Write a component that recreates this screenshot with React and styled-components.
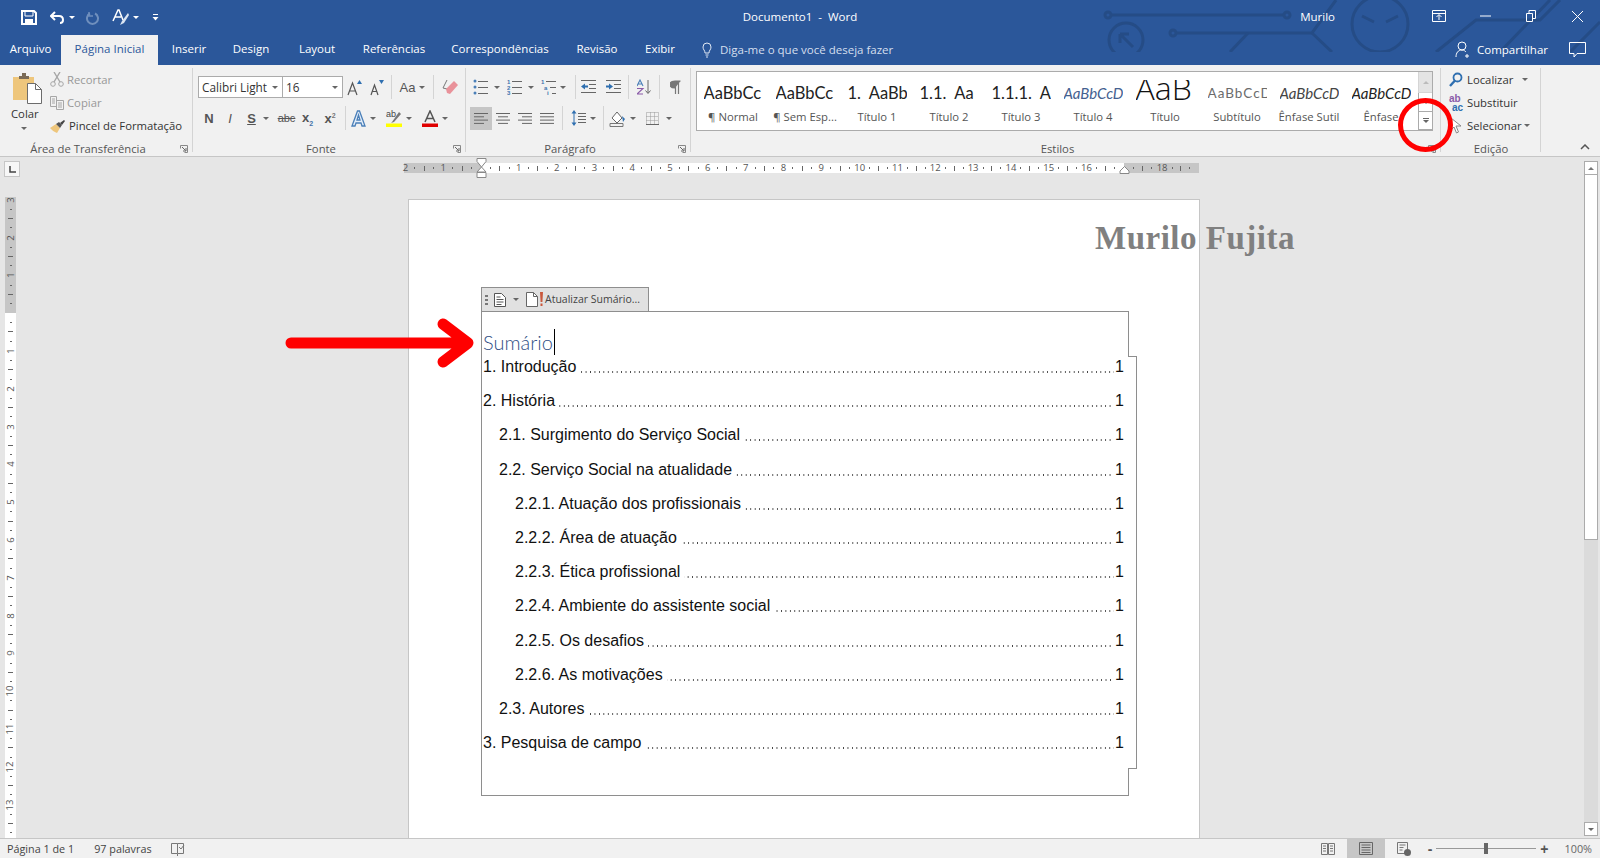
import styled, { createGlobalStyle } from 'styled-components';

const UI = "'Open Sans', 'Noto Sans', sans-serif";
const CM = 37.8;

const Global = createGlobalStyle`
html, body { margin: 0; padding: 0; background: #e6e6e6; }
* { box-sizing: border-box; }
svg { display: block; flex: none; }
`;

const Word = styled.div`
position: relative;
width: 1600px;
height: 858px;
overflow: hidden;
display: flex;
flex-direction: column;
font-family: ${UI};
font-size: 11.3px;
color: #444;
`;

/* ---------- title bar ---------- */
const Header = styled.header`
position: relative;
height: 65px;
flex: none;
background: #2b579a;
color: #fff;
`;
const Circuit = styled.svg`
position: absolute;
left: 1090px;
top: 0;
`;
const TitleRow = styled.div`
position: relative;
height: 35px;
display: grid;
grid-template-columns: 1fr auto 1fr;
align-items: center;
`;
const Qat = styled.div`
display: flex;
align-items: center;
padding-left: 21px;
`;
const QatBtn = styled.div`
width: ${p => p.$w}px;
display: flex;
align-items: center;
gap: 4px;
`;
const DocTitle = styled.div`
font-size: 11.5px;
margin-top: -3px;
`;
const TitleRight = styled.div`
display: flex;
align-items: center;
justify-content: flex-end;
`;
const UserName = styled.div`
font-size: 11.5px;
margin-right: 81px;
margin-top: -3px;
`;
const WinBtn = styled.div`
width: 46px;
height: 32px;
display: flex;
align-items: center;
justify-content: center;
margin-top: -3px;
`;
const TabRow = styled.nav`
position: relative;
height: 30px;
display: flex;
`;
const Tab = styled.div`
width: ${p => p.$w}px;
text-align: center;
line-height: 28px;
font-size: 11.5px;
color: ${p => (p.$active ? '#2b579a' : '#fff')};
background: ${p => (p.$active ? '#f1f1f1' : 'transparent')};
`;
const TellMe = styled.div`
display: flex;
align-items: center;
gap: 8px;
margin-left: 12px;
margin-top: -1px;
color: #d5dfee;
font-size: 11.5px;
`;
const Share = styled.div`
margin-left: auto;
margin-top: -1px;
display: flex;
align-items: center;
gap: 6px;
padding-right: 14px;
font-size: 11.5px;
`;
const ShareLabel = styled.span`
margin-right: 15px;
`;

/* ---------- ribbon ---------- */
const Ribbon = styled.section`
height: 92px;
flex: none;
display: flex;
background: #f1f1f1;
border-bottom: 1px solid #c6c6c6;
`;
const Group = styled.div`
position: relative;
width: ${p => p.$w}px;
padding-left: ${p => p.$pad || 0}px;
flex: none;
&::after {
  content: '';
  position: absolute;
  right: 0;
  top: 3px;
  bottom: 4px;
  width: 1px;
  background: #d4d4d4;
}
`;
const GroupLabel = styled.div`
position: absolute;
left: 0;
right: ${p => (p.$plain ? 0 : 17)}px;
bottom: -1px;
text-align: center;
font-size: 11.3px;
line-height: 16px;
color: #555;
`;
const Launcher = styled.svg`
position: absolute;
right: 5px;
bottom: 3px;
`;
const ClipBody = styled.div`
display: flex;
`;
const PasteCol = styled.div`
width: 50px;
padding-left: 13px;
padding-top: 8px;
display: flex;
flex-direction: column;
`;
const PasteLabel = styled.div`
color: #333;
margin: 2px 0 0 -2px;
line-height: 16px;
`;
const PasteCaret = styled.div`
display: flex;
margin: 5px 0 0 8px;
`;
const ClipList = styled.div`
padding-top: 3px;
`;
const ClipItem = styled.div`
height: 23px;
display: flex;
align-items: center;
gap: 3px;
color: ${p => (p.$off ? '#989898' : '#333')};
`;
const ToolRows = styled.div`
padding-top: 11px;
display: flex;
flex-direction: column;
gap: 9px;
`;
const ToolRow = styled.div`
height: 22px;
display: flex;
align-items: center;
`;
const Tool = styled.div`
width: ${p => p.$w}px;
height: ${p => (p.$active ? 23 : 22)}px;
flex: none;
display: flex;
align-items: center;
justify-content: center;
gap: ${p => p.$gap || 4}px;
background: ${p => (p.$active ? '#c6c6c6' : 'transparent')};
`;
const Sep = styled.div`
width: 1px;
height: 24px;
flex: none;
margin-left: ${p => p.$ml || 0}px;
background: #d4d4d4;
`;
const Caret = styled.span`
display: inline-block;
flex: none;
width: 0;
height: 0;
margin-left: ${p => p.$ml || 0}px;
border-left: 3px solid transparent;
border-right: 3px solid transparent;
border-top: 3px solid ${p => p.$color || '#666'};
`;
const Field = styled.div`
width: ${p => p.$w}px;
height: 22px;
flex: none;
display: flex;
align-items: center;
justify-content: space-between;
padding: 0 4px 0 3px;
background: #fff;
border: 1px solid #ababab;
margin-left: ${p => p.$ml || 0}px;
font-size: 11.8px;
color: #333;
`;
const LetterBtn = styled.span`
font-family: 'Liberation Sans', sans-serif;
font-size: ${p => p.$size || 13}px;
font-weight: ${p => (p.$bold ? 700 : 400)};
font-style: ${p => (p.$italic ? 'italic' : 'normal')};
text-decoration: ${p => p.$deco || 'none'};
color: #555;
`;
const Sub = styled.sub`
font-size: 7px;
color: #4472a8;
`;
const Sup = styled.sup`
font-size: 7px;
color: #777;
`;

/* styles gallery */
const Gallery = styled.div`
margin-top: 6px;
width: 737px;
height: 60px;
display: flex;
background: #fff;
border: 1px solid #ababab;
`;
const StyleItem = styled.div`
width: 72px;
flex: none;
display: flex;
flex-direction: column;
align-items: center;
`;
const Preview = styled.div`
width: 59px;
height: 30px;
margin-top: 8px;
flex: none;
overflow: hidden;
white-space: pre;
font-family: ${p => (p.$thin ? "'Open Sans'" : 'Lato')}, sans-serif;
font-weight: ${p => (p.$thin ? 300 : 400)};
font-size: ${p => p.$size || 16.5}px;
line-height: ${p => p.$lh || 26}px;
font-style: ${p => (p.$italic ? 'italic' : 'normal')};
letter-spacing: ${p => p.$ls || 0}px;
color: ${p => p.$color || '#222'};
`;
const StyleName = styled.div`
font-size: 11.3px;
line-height: 14px;
color: #555;
white-space: nowrap;
`;
const GalleryItems = styled.div`
width: 721px;
display: flex;
overflow: hidden;
`;
const GalleryScroll = styled.div`
width: 14px;
display: flex;
flex-direction: column;
`;
const GalleryBtn = styled.div`
height: ${p => p.$h}px;
display: flex;
flex-direction: column;
gap: 1px;
align-items: center;
justify-content: center;
background: ${p => (p.$off ? '#e4e4e4' : '#fff')};
border: 1px solid ${p => (p.$off ? '#d5d5d5' : '#ababab')};
border-width: 0 0 1px 1px;
`;
const MoreBar = styled.i`
display: block;
width: 6px;
height: 1px;
background: #666;
`;
const UpCaret = styled(Caret)`
border-top: 0;
border-bottom: 3px solid ${p => p.$color || '#777'};
`;
const EditList = styled.div`
padding-top: 3px;
`;
const EditItem = styled.div`
height: 23px;
display: flex;
align-items: center;
gap: 2px;
color: #333;
`;
const EditIcon = styled.span`
width: 18px;
flex: none;
display: flex;
justify-content: center;
margin-right: 0;
`;
const Collapse = styled.div`
flex: 1;
display: flex;
align-items: flex-end;
justify-content: flex-end;
padding: 0 10px 6px 0;
`;

/* ---------- document area ---------- */
const Workspace = styled.main`
flex: 1;
min-height: 0;
display: flex;
background: #e6e6e6;
`;
const DocColumn = styled.div`
flex: 1;
min-width: 0;
display: flex;
flex-direction: column;
`;
const RulerBar = styled.div`
height: 40px;
flex: none;
display: flex;
align-items: flex-start;
`;
const TabStop = styled.div`
width: 16px;
height: 16px;
margin: 4px 0 0 4px;
background: #f7f7f7;
border: 1px solid #c6c6c6;
display: flex;
align-items: center;
justify-content: center;
`;
const HRuler = styled.div`
position: relative;
width: 795px;
height: 10px;
margin: 6px 0 0 384px;
background: linear-gradient(to right, #c6c6c6 77px, #fff 77px, #fff 720px, #c6c6c6 720px);
`;
const HCells = styled.div`
display: flex;
height: 100%;
margin-left: -3.3px;
`;
const HCell = styled.div`
width: ${CM}px;
flex: none;
display: grid;
grid-template-columns: repeat(4, 1fr);
align-items: center;
justify-items: center;
`;
const RulerNum = styled.span`
font-size: 9.5px;
line-height: 10px;
color: #555;
white-space: nowrap;
`;
const HDot = styled.i`
display: block;
width: 1px;
height: 2px;
background: #666;
`;
const VDot = styled.i`
display: block;
width: 2px;
height: 1px;
background: #666;
`;
const HTick = styled.i`
display: block;
width: 1px;
height: 5px;
background: #666;
`;
const VTick = styled.i`
display: block;
width: 5px;
height: 1px;
background: #666;
`;
const HMarker = styled.svg`
position: absolute;
left: ${p => p.$x}px;
top: ${p => p.$y}px;
`;
const DocRow = styled.div`
flex: 1;
min-height: 0;
display: flex;
`;
const VRulerWrap = styled.div`
width: 16px;
flex: none;
padding-left: 5px;
`;
const VRuler = styled.div`
width: 11px;
height: 100%;
overflow: hidden;
background: linear-gradient(to bottom, #c6c6c6 116px, #fff 116px);
`;
const VCells = styled.div`
margin-top: -2.2px;
`;
const VCell = styled.div`
height: ${CM}px;
display: grid;
grid-template-rows: repeat(4, 1fr);
align-items: center;
justify-items: center;
`;
const VNum = styled(RulerNum)`
transform: rotate(-90deg);
`;
const Canvas = styled.div`
flex: 1;
min-width: 0;
overflow: hidden;
padding: 2px 0 0 392px;
`;
const Page = styled.article`
position: relative;
width: 792px;
height: 1100px;
background: #fff;
border: 1px solid #c6c6c6;
padding: 87px 0 0 72px;
font-family: 'Liberation Sans', Arial, sans-serif;
`;
const Watermark = styled.div`
position: absolute;
left: 686px;
top: 16px;
font-family: 'Liberation Serif', serif;
font-weight: 700;
font-size: 33px;
line-height: 44px;
letter-spacing: 0.5px;
color: #808080;
white-space: nowrap;
`;
const CcTab = styled.div`
width: 168px;
height: 24px;
display: flex;
align-items: center;
padding-left: 3px;
background: #e1e1e1;
border: 1px solid #8e8e8e;
border-bottom: 0;
font-family: ${UI};
font-size: 10.5px;
color: #444;
white-space: nowrap;
`;
const Grip = styled.div`
display: flex;
flex-direction: column;
gap: 2px;
margin-right: 6px;
& i { display: block; width: 3px; height: 2px; background: #777; }
`;
const CcCaret = styled.span`
width: 20px;
display: flex;
justify-content: center;
`;
const CcLabel = styled.span`
margin-left: 0;
margin-top: -2px;
`;
const CcHead = styled.div`
width: 648px;
height: 45px;
padding: 17px 0 0 1px;
background: #fff;
border: 1px solid #8e8e8e;
border-bottom: 0;
display: flex;
`;
const TocTitle = styled.h1`
margin: 0;
font-family: Lato, sans-serif;
font-weight: 300;
font-size: 20px;
line-height: 26px;
color: #2f4f85;
`;
const TextCursor = styled.span`
display: block;
width: 1px;
height: 26px;
margin-left: 1px;
background: #000;
`;
const CcBody = styled.div`
position: relative;
width: 656px;
border: 1px solid #8e8e8e;
border-width: 0 1px;
padding: 1px 12px 2px 1px;
&::before, &::after {
  content: '';
  position: absolute;
  right: -1px;
  width: 9px;
  height: 1px;
  background: #8e8e8e;
}
&::before { top: 0; }
&::after { bottom: 0; }
`;
const TocRow = styled.div`
height: 34.2px;
display: flex;
padding-left: ${p => p.$level * 16}px;
font-size: 16px;
line-height: 20px;
color: #111;
`;
const Leader = styled.span`
flex: 1;
min-width: 0;
height: 20px;
margin: 0 1px 0 4px;
background-image: linear-gradient(to right, #444 1.2px, transparent 1.2px);
background-size: 4.45px 1.5px;
background-repeat: repeat-x;
background-position: right 0 bottom 4.5px;
`;
const CcFoot = styled.div`
width: 648px;
height: 27px;
border: 1px solid #8e8e8e;
border-top: 0;
`;

/* scrollbar */
const ScrollBar = styled.div`
width: 14px;
flex: none;
margin: 4px 2px 2px 0;
display: flex;
flex-direction: column;
background: #dbdbdb;
`;
const ScrollBtn = styled.div`
height: 14px;
flex: none;
display: flex;
align-items: center;
justify-content: center;
background: #fff;
border: 1px solid #ababab;
`;
const Thumb = styled.div`
height: 365px;
flex: none;
background: #fff;
border: 1px solid #ababab;
border-top: 0;
`;
const ScrollRest = styled.div`
flex: 1;
`;

/* status bar */
const Status = styled.footer`
height: 20px;
flex: none;
display: flex;
align-items: center;
background: #f1f1f1;
border-top: 1px solid #c6c6c6;
font-size: 10.8px;
color: #444;
padding-left: 7px;
`;
const StatusText = styled.span`
margin-right: ${p => p.$mr}px;
`;
const StatusRight = styled.div`
margin-left: auto;
height: 100%;
display: flex;
align-items: center;
`;
const ViewBtn = styled.div`
width: 38px;
height: 100%;
display: flex;
align-items: center;
justify-content: center;
background: ${p => (p.$active ? '#c6c6c6' : 'transparent')};
`;
const ZoomTrack = styled.div`
position: relative;
width: 100px;
height: 1px;
margin: 0 4px;
background: #999;
`;
const ZoomThumb = styled.div`
position: absolute;
left: 48px;
top: -5px;
width: 4px;
height: 11px;
background: #666;
`;
const ZoomSign = styled.span`
margin-left: ${p => p.$ml || 0}px;
font-family: 'Liberation Sans', sans-serif;
font-weight: 700;
font-size: 14px;
line-height: 14px;
color: #555;
`;
const ZoomValue = styled.span`
margin: 0 8px 0 16px;
color: #666;
`;

/* annotations drawn on top of the screenshot */
const Arrow = styled.svg`
position: absolute;
left: 280px;
top: 312px;
`;
const Circle = styled.div`
position: absolute;
left: 1398px;
top: 98px;
width: 55px;
height: 54px;
border: 5px solid #f00;
border-radius: 50%;
`;

/* ---------- icons ---------- */
const Line = ({ d, c = '#666', w = 1 }) => <path d={d} fill="none" stroke={c} strokeWidth={w} />;

const SaveIcon = () => <svg width="16" height="15" viewBox="0 0 16 15"><path d="M1 1h12l2 2v11H1z" fill="none" stroke="#fff" strokeWidth="2" /><path d="M4 1h8v5H4z" fill="none" stroke="#fff" /><path d="M4 9h8v5H4z" fill="#fff" /></svg>;
const UndoIcon = () => <svg width="15" height="13" viewBox="0 0 15 13"><path d="M5 1L1 5l4 4" fill="none" stroke="#fff" strokeWidth="2" /><path d="M1 5h8c3 0 4 2 4 4s-1 3-3 3" fill="none" stroke="#fff" strokeWidth="2" /></svg>;
const RedoIcon = () => <svg width="14" height="14" viewBox="0 0 14 14"><path d="M9 2.500a5.500 5.500 0 1 1-5 0" fill="none" stroke="#6f8fbd" strokeWidth="2" /><path d="M3 1v4h4" fill="none" stroke="#6f8fbd" strokeWidth="1.500" /></svg>;
const FormatIcon = () => <svg width="17" height="17" viewBox="0 0 17 17"><path d="M1 12L6 1h1l4 10M3 8h6" fill="none" stroke="#fff" strokeWidth="1.500" /><path d="M16 4l-6 8-2 4 4-2 5-8z" fill="#dbe5f2" /></svg>;
const CustomizeIcon = () => <svg width="7" height="7" viewBox="0 0 7 7"><path d="M1 .5h5" stroke="#fff" /><path d="M.5 3h6L3.500 6.500z" fill="#fff" /></svg>;
const RestoreRibbon = () => <svg width="14" height="12" viewBox="0 0 14 12"><path d="M.5.5h13v11H.5zM.5 3.500h13" fill="none" stroke="#fff" /><path d="M7 10V5M4.500 7L7 4.500 9.500 7" fill="none" stroke="#fff" /></svg>;
const MinIcon = () => <svg width="11" height="2" viewBox="0 0 11 2"><path d="M0 1h11" stroke="#fff" /></svg>;
const MaxIcon = () => <svg width="10" height="12" viewBox="0 0 10 12"><path d="M.5 3.500h6v8h-6zM3 3V.5h6.500v8H7" fill="none" stroke="#fff" /></svg>;
const CloseIcon = () => <svg width="11" height="11" viewBox="0 0 11 11"><path d="M0 0l11 11M11 0L0 11" stroke="#fff" /></svg>;
const BulbIcon = () => <svg width="10" height="16" viewBox="0 0 10 16"><path d="M3 11C3 8 1 8 1 5a4 4 0 0 1 8 0c0 3-2 3-2 6zM3.500 13h3M4 15h2" fill="none" stroke="#dfe7f3" /></svg>;
const PersonIcon = () => <svg width="16" height="17" viewBox="0 0 16 17"><circle cx="7" cy="5" r="4" fill="none" stroke="#fff" /><path d="M1 16c0-4 2-7 6-7 2 0 3 1 4 2M12 13v4M10 15h4" fill="none" stroke="#fff" /></svg>;
const CommentIcon = () => <svg width="17" height="16" viewBox="0 0 17 16"><path d="M.5.5h16v11H8l-3 3.500v-3.500H.5z" fill="none" stroke="#fff" /></svg>;

const PasteIcon = () => <svg width="29" height="31" viewBox="0 0 29 31"><path d="M0 4h21v23H0z" fill="#eec67c" /><path d="M6 3h3V0h4v3h3v3H6z" fill="#7a6a55" /><path d="M14.500 10.500h8l6 6v14h-14z" fill="#fff" stroke="#6c6c6c" /><path d="M22.500 10.500v6h6" fill="none" stroke="#6c6c6c" /></svg>;
const CutIcon = () => <svg width="14" height="15" viewBox="0 0 14 15"><circle cx="3" cy="12" r="2.300" fill="none" stroke="#a6a6a6" /><circle cx="11" cy="12" r="2.300" fill="none" stroke="#a6a6a6" /><path d="M4 10L10 0M10 10L4 0" stroke="#a6a6a6" strokeWidth="1.400" /></svg>;
const CopyIcon = () => <svg width="14" height="14" viewBox="0 0 14 14"><path d="M.5.5h6v10h-6zM6.500 4.500h7v9h-7zM2 3h3M2 5h3M2 7h3M8 7h4M8 9h4M8 11h4" fill="#f1f1f1" stroke="#a6a6a6" /></svg>;
const BrushIcon = () => <svg width="16" height="14" viewBox="0 0 16 14"><path d="M0 9l6-4 4 4-3 5C4 13 2 11 0 9z" fill="#eec67c" /><path d="M6 5l4 4 2-3-3-3z" fill="#555" /><path d="M10 4l4-3 1 1-3 4z" fill="#444" /></svg>;

const GrowIcon = ({ big, c }) => (
  <svg width="16" height="17" viewBox="0 0 16 17">
    <path d={big ? 'M1 16L5.500 4 10 16M2.500 12h6' : 'M2 16l3.500-10L9 16M3.300 12.500h4.500'} fill="none" stroke="#555" strokeWidth="1.200" />
    <path d={big ? 'M10 5l2.500-4L15 5z' : 'M10 1h5l-2.500 4z'} fill={c} />
  </svg>
);
const EraserIcon = () => <svg width="17" height="17" viewBox="0 0 17 17"><path d="M5 1L1 9l4 1" fill="none" stroke="#777" /><path d="M4 10l8-8 4 4-8 9-3-1z" fill="#e9929a" /></svg>;
const TextFx = () => <svg width="15" height="17" viewBox="0 0 15 17"><path d="M1 16L6.500 1h2L14 16h-3l-1-3H5l-1 3zM6 10h3L7.500 5z" fill="#e3edf8" stroke="#4a7fb8" strokeWidth="1.300" /></svg>;
const Highlight = () => <svg width="16" height="18" viewBox="0 0 16 18"><path d="M0 14.500h16V18H0z" fill="#ff0" /><path d="M6 13l7-10 2 2-7 8-3 1z" fill="#777" /><text x="0" y="8" fontFamily="Liberation Sans" fontSize="9" fill="#444">ab</text></svg>;
const ColorA = () => <svg width="16" height="17" viewBox="0 0 16 17"><path d="M0 13.500h16V17H0z" fill="#e00000" /><path d="M3 12L8 1l5 11M4.500 8.500h7" fill="none" stroke="#555" strokeWidth="1.500" /></svg>;

const ListIcon = ({ kind }) => {
  if (kind === 'bullet') {
    return (
      <svg width="15" height="16" viewBox="0 0 15 16">
        {[2, 8, 14].map(y => <circle key={y} cx="2" cy={y} r="1.500" fill="#4a7fb8" />)}
        <Line d="M5 2.500h10M5 8.500h10M5 14.500h10" />
      </svg>
    );
  }
  const marks = kind === 'number' ? [['1', 0], ['2', 0], ['3', 0]] : [['1', 0], ['a', 3], ['i', 6]];
  return (
    <svg width="15" height="16" viewBox="0 0 15 16">
      {marks.map(([m, x], i) => <text key={m} x={x} y={5 + i * 5.5} fontFamily="Liberation Sans" fontSize="6" fontWeight="700" fill="#3f73ad">{m}</text>)}
      <Line d={kind === 'multi' ? 'M5 2.500h10M9 8.500h6M11 14.500h4' : 'M5 2.500h10M5 8.500h10M5 14.500h10'} />
    </svg>
  );
};
const IndentIcon = ({ out }) => (
  <svg width="15" height="14" viewBox="0 0 15 14">
    <Line d="M0 .5h15M8 4.500h7M8 8.500h7M0 12.500h15" />
    <path d={out ? 'M0 6.500l4-3v2h3v2H4v2z' : 'M7 6.500l-4-3v2H0v2h3v2z'} fill="#2f6fb0" />
  </svg>
);
const SortIcon = () => <svg width="15" height="16" viewBox="0 0 15 16"><path d="M0 7l3-6 3 6M1 5h4" fill="none" stroke="#4a7fb8" strokeWidth="1.100" /><path d="M0 9.500h6L0 15h6" fill="none" stroke="#8a5aa8" strokeWidth="1.100" /><path d="M11 1v13M8.500 11.500L11 14.500l2.500-3" fill="none" stroke="#666" /></svg>;
const PilcrowIcon = () => <svg width="11" height="14" viewBox="0 0 11 14"><path d="M5 8C1 8 0 6 0 4.500S1 1 5 1h5.500M5.500 1v13M8.500 1v13" fill="#777" stroke="#777" strokeWidth="1.200" /></svg>;
const AlignIcon = ({ lines }) => (
  <svg width="14" height="11" viewBox="0 0 14 11">
    {lines.map(([x, w], i) => <path key={i} d={`M${x} ${i * 3.3 + 0.5}h${w}`} stroke="#666" />)}
  </svg>
);
const SpacingIcon = () => <svg width="15" height="16" viewBox="0 0 15 16"><path d="M3 0L.5 3.500h5zM3 16L.5 12.500h5z" fill="#2f6fb0" /><path d="M3 3v10" stroke="#2f6fb0" /><Line d="M7 3.500h8M7 6.500h8M7 9.500h8M7 12.500h8" /></svg>;
const ShadeIcon = () => <svg width="17" height="17" viewBox="0 0 17 17"><path d="M1 13.500h13v3H1z" fill="none" stroke="#777" /><path d="M3 8l5-6 5 6-5 5z" fill="#fff" stroke="#666" /><path d="M13 6l3 3-2 3z" fill="#2f6fb0" /></svg>;
const BorderIcon = () => <svg width="13" height="13" viewBox="0 0 13 13"><path d="M.5.5h12v12H.5zM4.500.5v12M8.500.5v12M.5 4.500h12M.5 8.500h12" fill="none" stroke="#999" strokeDasharray="1 1" /><path d="M0 12.500h13" stroke="#666" /></svg>;

const FindIcon = () => <svg width="14" height="15" viewBox="0 0 14 15"><circle cx="8.500" cy="5.500" r="4" fill="none" stroke="#2f6fb0" strokeWidth="1.800" /><path d="M6 8.500L1 14" stroke="#2f6fb0" strokeWidth="2.400" /></svg>;
const ReplaceIcon = () => <svg width="16" height="18" viewBox="0 0 16 18"><text x="1" y="8" fontFamily="Liberation Sans" fontSize="10" fontWeight="700" fill="#8a5aa8">ab</text><text x="4" y="17" fontFamily="Liberation Sans" fontSize="10" fontWeight="700" fill="#2f6fb0">ac</text></svg>;
const SelectIcon = () => <svg width="13" height="17" viewBox="0 0 13 17"><path d="M1 1v12l3-3 2.500 6 2-1L6 9h5z" fill="#fff" stroke="#888" /></svg>;
const BookCheck = () => <svg width="14" height="15" viewBox="0 0 14 15"><path d="M6.500 2.500h-6v10h6zm0 0h6v10h-6M6.500 13v2" fill="none" stroke="#777" /><path d="M8 6l2 2 3-4" fill="none" stroke="#777" /></svg>;
const ReadIcon = () => <svg width="14" height="14" viewBox="0 0 14 14"><path d="M.5 1.500h6v11h-6zM7.500 1.500h6v11h-6zM2 4h3M2 6.500h3M2 9h3M9 4h3M9 6.500h3M9 9h3" fill="#f1f1f1" stroke="#777" /></svg>;
const PrintIcon = () => <svg width="14" height="13" viewBox="0 0 14 13"><path d="M.5.500h13v12H.5zM2.500 3h9M2.500 5.500h9M2.500 8h9M2.500 10.500h9" fill="none" stroke="#666" /></svg>;
const WebIcon = () => <svg width="14" height="14" viewBox="0 0 14 14"><path d="M.5.500h10v11H.5zM2.500 3h6M2.500 5.500h4M2.500 8h3" fill="#f1f1f1" stroke="#777" /><circle cx="10.500" cy="10.500" r="3.500" fill="#666" /></svg>;
const TocDocIcon = () => <svg width="12" height="14" viewBox="0 0 12 14"><path d="M.5.500h7l4 4v9h-11zM2.500 4h4M2.500 6.500h7M2.500 9h7M2.500 11.500h5" fill="#fff" stroke="#555" /></svg>;
const UpdateIcon = () => <svg width="19" height="15" viewBox="0 0 19 15"><path d="M.5.500h7l4 4v10h-11z" fill="#fff" stroke="#666" /><path d="M7.500.5v4h4" fill="none" stroke="#666" /><path d="M14 0h3l-.6 10h-1.800zM14.500 11.500h2v2.500h-2z" fill="#c9583c" /></svg>;
const LauncherIcon = () => <Launcher width="8" height="8" viewBox="0 0 8 8"><path d="M.5 3.500v-3h7v7h-3" fill="none" stroke="#888" /><path d="M2 2l3.500 3.500M6 3v3H3" fill="none" stroke="#666" /></Launcher>;

/* ---------- data ---------- */
const TABS = [
  ['Arquivo', 61], ['Página Inicial', 97, true], ['Inserir', 62], ['Design', 62], ['Layout', 70],
  ['Referências', 84], ['Correspondências', 128], ['Revisão', 66], ['Exibir', 60],
];
const STYLES = [
  { text: 'AaBbCc', name: '¶ Normal' },
  { text: 'AaBbCc', name: '¶ Sem Esp...' },
  { text: '1.  AaBb', name: 'Título 1' },
  { text: '1.1.  Aa', name: 'Título 2' },
  { text: '1.1.1.  A', name: 'Título 3' },
  { text: 'AaBbCcD', name: 'Título 4', italic: true, color: '#44608f', size: 15 },
  { text: 'AaB', name: 'Título', size: 32, lh: 15, thin: true, color: '#111' },
  { text: 'AaBbCcD', name: 'Subtítulo', color: '#6b6b6b', size: 13.5, ls: 1 },
  { text: 'AaBbCcD', name: 'Ênfase Sutil', italic: true, color: '#444', size: 15 },
  { text: 'AaBbCcD', name: 'Ênfase', italic: true, size: 15 },
];
const TOC = [
  ['1. Introdução', 0], ['2. História', 0], ['2.1. Surgimento do Serviço Social', 1],
  ['2.2. Serviço Social na atualidade', 1], ['2.2.1. Atuação dos profissionais', 2],
  ['2.2.2. Área de atuação', 2], ['2.2.3. Ética profissional', 2],
  ['2.2.4. Ambiente do assistente social', 2], ['2.2.5. Os desafios', 2],
  ['2.2.6. As motivações', 2], ['2.3. Autores', 1], ['3. Pesquisa de campo', 0],
];
const H_NUMS = [2, 1, '', ...Array.from({ length: 18 }, (_, i) => (i === 16 ? '' : i + 1))];
const V_NUMS = [3, 2, 1, '', ...Array.from({ length: 13 }, (_, i) => i + 1)];

const CircuitArt = () => (
  <Circuit width="510" height="52" viewBox="0 0 510 52">
    <g fill="none" stroke="#254c86" strokeWidth="3">
      <circle cx="18" cy="15" r="3" />
      <path d="M21 15h173" />
      <circle cx="197" cy="15" r="3" />
      <circle cx="36" cy="40" r="17" />
      <path d="M30 34l13 13M30 34h9M30 34v9" />
      <circle cx="83" cy="33" r="3" />
      <path d="M86 33h136l24-33" />
      <path d="M140 52l18-19" />
      <path d="M222 33l20 19" />
      <circle cx="290" cy="24" r="28" />
      <path d="M272 16l12 6M308 16l-12 6" />
      <path d="M346 52l40-32h64l20-20" />
      <path d="M410 52l50-52M480 52l30-30" />
    </g>
  </Circuit>
);

const Ruler = () => (
  <HRuler>
    <HCells>
      {H_NUMS.map((n, i) => (
        <HCell key={i}><RulerNum>{n}</RulerNum><HDot /><HTick /><HDot /></HCell>
      ))}
    </HCells>
    <HMarker $x={72} $y={-5} width="11" height="20" viewBox="0 0 11 20">
      <path d="M1 .5h9v3L5.500 9 1 3.500zM5.500 9l4.500 5H1z" fill="#fff" stroke="#888" />
      <path d="M1 14.500h9v5H1z" fill="#fff" stroke="#888" />
    </HMarker>
    <HMarker $x={715} $y={3} width="11" height="8" viewBox="0 0 11 8">
      <path d="M5.500 .5L10 5v2.500H1V5z" fill="#fff" stroke="#888" />
    </HMarker>
  </HRuler>
);

export default function App() {
  return (
    <Word>
      <Global />
      <Header>
        <CircuitArt />
        <TitleRow>
          <Qat>
            <QatBtn $w={29}><SaveIcon /></QatBtn>
            <QatBtn $w={36}><UndoIcon /><Caret $color="#fff" /></QatBtn>
            <QatBtn $w={26}><RedoIcon /></QatBtn>
            <QatBtn $w={40}><FormatIcon /><Caret $color="#fff" /></QatBtn>
            <QatBtn $w={10}><CustomizeIcon /></QatBtn>
          </Qat>
          <DocTitle>Documento1 &nbsp;-&nbsp; Word</DocTitle>
          <TitleRight>
            <UserName>Murilo</UserName>
            <WinBtn><RestoreRibbon /></WinBtn>
            <WinBtn><MinIcon /></WinBtn>
            <WinBtn><MaxIcon /></WinBtn>
            <WinBtn><CloseIcon /></WinBtn>
          </TitleRight>
        </TitleRow>
        <TabRow>
          {TABS.map(([label, w, active]) => <Tab key={label} $w={w} $active={active}>{label}</Tab>)}
          <TellMe><BulbIcon />Diga-me o que você deseja fazer</TellMe>
          <Share><PersonIcon /><ShareLabel>Compartilhar</ShareLabel><CommentIcon /></Share>
        </TabRow>
      </Header>

      <Ribbon>
        <Group $w={193}>
          <ClipBody>
            <PasteCol>
              <PasteIcon />
              <PasteLabel>Colar</PasteLabel>
              <PasteCaret><Caret /></PasteCaret>
            </PasteCol>
            <ClipList>
              <ClipItem $off><CutIcon />Recortar</ClipItem>
              <ClipItem $off><CopyIcon />Copiar</ClipItem>
              <ClipItem><BrushIcon />Pincel de Formatação</ClipItem>
            </ClipList>
          </ClipBody>
          <GroupLabel>Área de Transferência</GroupLabel>
          <LauncherIcon />
        </Group>

        <Group $w={273} $pad={5}>
          <ToolRows>
            <ToolRow>
              <Field $w={85}>Calibri Light<Caret /></Field>
              <Field $w={61} $ml={-1}>16<Caret /></Field>
              <Tool $w={23}><GrowIcon big c="#2f6fb0" /></Tool>
              <Tool $w={22}><GrowIcon c="#2f6fb0" /></Tool>
              <Sep $ml={3} />
              <Tool $w={41}><LetterBtn $size={13}>Aa</LetterBtn><Caret /></Tool>
              <Sep />
              <Tool $w={32}><EraserIcon /></Tool>
            </ToolRow>
            <ToolRow>
              <Tool $w={22}><LetterBtn $bold>N</LetterBtn></Tool>
              <Tool $w={20}><LetterBtn $italic>I</LetterBtn></Tool>
              <Tool $w={36} $gap={7}><LetterBtn $bold $deco="underline">S</LetterBtn><Caret /></Tool>
              <Tool $w={21}><LetterBtn $size={11} $deco="line-through">abc</LetterBtn></Tool>
              <Tool $w={21}><LetterBtn $bold>x<Sub>2</Sub></LetterBtn></Tool>
              <Tool $w={24}><LetterBtn $bold>x<Sup>2</Sup></LetterBtn></Tool>
              <Sep $ml={3} />
              <Tool $w={35}><TextFx /><Caret /></Tool>
              <Tool $w={36}><Highlight /><Caret /></Tool>
              <Tool $w={35}><ColorA /><Caret /></Tool>
            </ToolRow>
          </ToolRows>
          <GroupLabel>Fonte</GroupLabel>
          <LauncherIcon />
        </Group>

        <Group $w={225} $pad={4}>
          <ToolRows>
            <ToolRow>
              <Tool $w={33} $gap={6}><ListIcon kind="bullet" /><Caret /></Tool>
              <Tool $w={34} $gap={6}><ListIcon kind="number" /><Caret /></Tool>
              <Tool $w={33}><ListIcon kind="multi" /><Caret /></Tool>
              <Sep $ml={5} />
              <Tool $w={25}><IndentIcon out /></Tool>
              <Tool $w={24}><IndentIcon /></Tool>
              <Sep $ml={3} />
              <Tool $w={30}><SortIcon /></Tool>
              <Sep />
              <Tool $w={30}><PilcrowIcon /></Tool>
            </ToolRow>
            <ToolRow>
              <Tool $w={22} $active><AlignIcon lines={[[0, 14], [0, 10], [0, 14], [0, 10]]} /></Tool>
              <Tool $w={22}><AlignIcon lines={[[0, 14], [2, 10], [0, 14], [2, 10]]} /></Tool>
              <Tool $w={22}><AlignIcon lines={[[0, 14], [4, 10], [0, 14], [4, 10]]} /></Tool>
              <Tool $w={22}><AlignIcon lines={[[0, 14], [0, 14], [0, 14], [0, 14]]} /></Tool>
              <Sep $ml={4} />
              <Tool $w={40}><SpacingIcon /><Caret /></Tool>
              <Sep />
              <Tool $w={37}><ShadeIcon /><Caret /></Tool>
              <Tool $w={35} $gap={7}><BorderIcon /><Caret /></Tool>
            </ToolRow>
          </ToolRows>
          <GroupLabel>Parágrafo</GroupLabel>
          <LauncherIcon />
        </Group>

        <Group $w={750} $pad={5}>
          <Gallery>
            <GalleryItems>
              {STYLES.map((s, i) => (
                <StyleItem key={i}>
                  <Preview $size={s.size} $lh={s.lh} $thin={s.thin} $italic={s.italic} $color={s.color} $ls={s.ls}>{s.text}</Preview>
                  <StyleName>{s.name}</StyleName>
                </StyleItem>
              ))}
            </GalleryItems>
            <GalleryScroll>
              <GalleryBtn $h={21} $off><UpCaret $color="#bbb" /></GalleryBtn>
              <GalleryBtn $h={19}><Caret /></GalleryBtn>
              <GalleryBtn $h={18}><MoreBar /><Caret /></GalleryBtn>
            </GalleryScroll>
          </Gallery>
          <GroupLabel>Estilos</GroupLabel>
          <LauncherIcon />
        </Group>

        <Group $w={100} $pad={6}>
          <EditList>
            <EditItem><EditIcon><FindIcon /></EditIcon>Localizar<Caret $ml={7} /></EditItem>
            <EditItem><EditIcon><ReplaceIcon /></EditIcon>Substituir</EditItem>
            <EditItem><EditIcon><SelectIcon /></EditIcon>Selecionar<Caret /></EditItem>
          </EditList>
          <GroupLabel $plain>Edição</GroupLabel>
        </Group>

        <Collapse>
          <svg width="10" height="6" viewBox="0 0 10 6"><path d="M1 5l4-4 4 4" fill="none" stroke="#555" strokeWidth="1.500" /></svg>
        </Collapse>
      </Ribbon>

      <Workspace>
        <DocColumn>
          <RulerBar>
            <TabStop>
              <svg width="7" height="7" viewBox="0 0 7 7"><path d="M1 0v6h6" fill="none" stroke="#444" strokeWidth="1.500" /></svg>
            </TabStop>
            <Ruler />
          </RulerBar>
          <DocRow>
            <VRulerWrap>
              <VRuler>
                <VCells>
                  {V_NUMS.map((n, i) => (
                    <VCell key={i}><VNum>{n}</VNum><VDot /><VTick /><VDot /></VCell>
                  ))}
                </VCells>
              </VRuler>
            </VRulerWrap>
            <Canvas>
              <Page>
                <Watermark>Murilo Fujita</Watermark>
                <CcTab>
                  <Grip><i /><i /><i /></Grip>
                  <TocDocIcon />
                  <CcCaret><Caret /></CcCaret>
                  <UpdateIcon />
                  <CcLabel>Atualizar Sumário...</CcLabel>
                </CcTab>
                <CcHead>
                  <TocTitle>Sumário</TocTitle>
                  <TextCursor />
                </CcHead>
                <CcBody>
                  {TOC.map(([title, level]) => (
                    <TocRow key={title} $level={level}>
                      <span>{title}</span>
                      <Leader />
                      <span>1</span>
                    </TocRow>
                  ))}
                </CcBody>
                <CcFoot />
              </Page>
            </Canvas>
          </DocRow>
        </DocColumn>
        <ScrollBar>
          <ScrollBtn><UpCaret /></ScrollBtn>
          <Thumb />
          <ScrollRest />
          <ScrollBtn><Caret /></ScrollBtn>
        </ScrollBar>
      </Workspace>

      <Status>
        <StatusText $mr={20}>Página 1 de 1</StatusText>
        <StatusText $mr={19}>97 palavras</StatusText>
        <BookCheck />
        <StatusRight>
          <ViewBtn><ReadIcon /></ViewBtn>
          <ViewBtn $active><PrintIcon /></ViewBtn>
          <ViewBtn><WebIcon /></ViewBtn>
          <ZoomSign $ml={5}>-</ZoomSign>
          <ZoomTrack><ZoomThumb /></ZoomTrack>
          <ZoomSign>+</ZoomSign>
          <ZoomValue>100%</ZoomValue>
        </StatusRight>
      </Status>

      <Arrow width="200" height="62" viewBox="0 0 200 62">
        <path d="M11 31H185M163 12l25 19-25 19" fill="none" stroke="#f00" strokeWidth="11" strokeLinecap="round" strokeLinejoin="round" />
      </Arrow>
      <Circle />
    </Word>
  );
}
